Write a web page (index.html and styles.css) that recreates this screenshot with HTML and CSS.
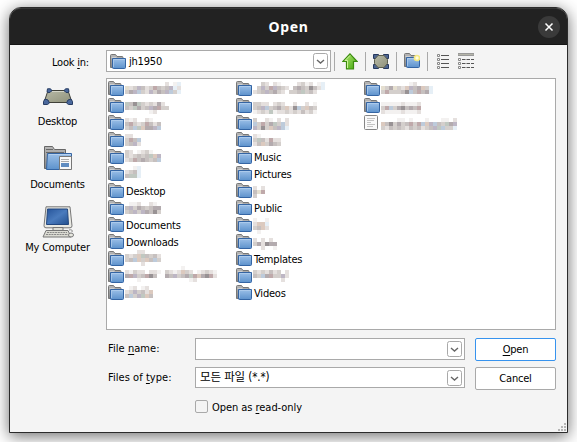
FILE: index.html
```html
<!DOCTYPE html>
<html lang="en">
<head>
<meta charset="utf-8">
<title>Open</title>
<link rel="stylesheet" href="styles.css">
</head>
<body>
<svg class="defs" width="0" height="0" aria-hidden="true">
  <defs>
    <linearGradient id="blue" x1="0" y1="0" x2="0" y2="1"><stop offset="0" stop-color="#9cc0e8"/><stop offset="1" stop-color="#5d92cc"/></linearGradient>
    <linearGradient id="grey" x1="0" y1="0" x2="0" y2="1"><stop offset="0" stop-color="#b8b8b8"/><stop offset="1" stop-color="#858585"/></linearGradient>
    <linearGradient id="olive" x1="0" y1="0" x2="1" y2="1"><stop offset="0" stop-color="#b9bba8"/><stop offset="1" stop-color="#8e9079"/></linearGradient>
    <linearGradient id="screen" x1="0" y1="0" x2="1" y2="1"><stop offset="0" stop-color="#26549a"/><stop offset=".5" stop-color="#4a7bbd"/><stop offset="1" stop-color="#23508f"/></linearGradient>
    <linearGradient id="green" x1="0" y1="0" x2="1" y2="1"><stop offset="0" stop-color="#b5e878"/><stop offset="1" stop-color="#43a80c"/></linearGradient>
    <symbol id="folder" viewBox="0 0 16 15">
      <path d="M.5 13.500V1.500q0-1 1-1h4l1.500 2h5q1 0 1 1v10z" fill="url(#grey)" stroke="#777"/>
      <path d="M1.500 3.500h5" stroke="#cfcfcf"/>
      <path d="M2.500 4.500h13v9q0 1-1 1h-11q-1 0-1-1z" fill="url(#blue)" stroke="#3465a4"/>
      <path d="M3.500 13V5.500h11" fill="none" stroke="#b5d0ee" stroke-opacity=".7"/>
    </symbol>
    <symbol id="file" viewBox="0 0 14 15">
      <rect x=".5" y=".5" width="13" height="14" rx="1" fill="#fafafa" stroke="#858585"/>
      <path d="M3 3.500h8M3 5.500h7M3 7.500h4M3 9.500h8M3 11.500h6" stroke="#c4c4c4"/>
    </symbol>
    <symbol id="chevron" viewBox="0 0 15 16">
      <rect x=".5" y=".5" width="14" height="15" rx="2" fill="#fff" stroke="#a9a9a9"/>
      <path d="M4 7 7.500 10 11 7" fill="none" stroke="#666" stroke-width="1.400"/>
    </symbol>
  </defs>
</svg>
<main class="window">
  <header class="titlebar">
    <h1>Open</h1>
    <button class="close" aria-label="Close"><svg width="22" height="22"><path d="M7.500 7.500l7 7m0-7l-7 7" stroke="#fff" stroke-width="1.500"/></svg></button>
  </header>
  <div class="content">
    <div class="toolbar">
      <span class="look">Look <u>i</u>n:</span>
      <div class="combo lookin"><svg width="16" height="15"><use href="#folder"/></svg><span>jh1950</span><svg class="arrow" width="15" height="16"><use href="#chevron"/></svg></div>
      <div class="tools">
        <i class="sep"></i>
        <svg class="tool" width="16" height="17"><path d="M8 .8 15.200 8.500H11.500v7.500h-7V8.500H.8z" fill="url(#green)" stroke="#3c8c10" stroke-width="1.200"/><path d="M8 2.500 3 7.500h2.500V15" fill="none" stroke="#cdf49b"/></svg>
        <i class="sep"></i>
        <svg class="tool" width="16" height="15"><path d="M.5.500h5v4h-5zM10.500.500h5v4h-5zM.5 10.500h5v4h-5zM10.500 10.500h5v4h-5z" fill="#4c6490" stroke="#26395e"/><path d="M5 1.500h6l3.500 4v4l-3.500 4H5L1.500 9.500v-4z" fill="url(#olive)" stroke="#5e604f"/></svg>
        <i class="sep"></i>
        <svg class="tool newdir" width="16" height="16"><use href="#folder" width="16" height="15"/><circle cx="13" cy="5" r="3.300" fill="#f5e982"/><circle cx="13" cy="5" r="1.700" fill="#fffce0"/></svg>
        <i class="sep"></i>
        <svg class="tool list-tool" width="12" height="15"><path d="M4 1.500h8M4 5.500h8M4 9.500h8M4 13.500h8" stroke="#555"/><path d="M.5.500h2v2h-2zM.5 4.500h2v2h-2zM.5 8.500h2v2h-2zM.5 12.500h2v2h-2z" fill="#fff" stroke="#888"/></svg>
        <svg class="tool" width="16" height="16"><path d="M0 .5h16v2H0z" fill="#b5b5a9" stroke="#999"/><path d="M4 6.500h12M4 10.500h12M4 14.500h12" stroke="#555" stroke-dasharray="3.500 1"/><path d="M.5 5.500h2v2h-2zM.5 9.500h2v2h-2zM.5 13.500h2v2h-2z" fill="#fff" stroke="#888"/></svg>
      </div>
    </div>
    <div class="middle">
      <nav class="places">
        <div class="place desk"><svg width="30" height="17"><path d="M5 2.500h20l4 12H1z" fill="url(#olive)" stroke="#3f4038"/><path d="M6 3.500h18" stroke="#d4d5c8"/><path d="M4.500.800h3l1.500 2-3 2-2-1zM25.500.800h-3l-1.500 2 3 2 2-1zM2 11l3 1 1.500 3-2 1.500H.5v-3zM28 11l-3 1-1.500 3 2 1.500h4v-3z" fill="#4a689c" stroke="#273c63"/></svg><span>Desktop</span></div>
        <div class="place docs"><svg width="30" height="26"><path d="M1.500 23.500V1.500h8l2 3h11v19z" fill="url(#grey)" stroke="#666"/><path d="M3 4.500h7M3 7.500h18" stroke="#686868"/><path d="M4.500 8.500h24v14q0 2-2 2h-23z" fill="url(#blue)" stroke="#3465a4"/><path d="M6 9.500h22" stroke="#b5d0ee"/><path d="M16.500 11.500h12v13h-12z" fill="#f8f8f8" stroke="#777"/><path d="M18 14.500h8M18 16.500h8" stroke="#aaa"/><path d="M18 18h8v4h-8z" fill="#608cc0"/></svg><span>Documents</span></div>
        <div class="place comp"><svg width="32" height="32"><path d="M4 .8h24l2 19q0 2-2 2H4q-2 0-2-2z" fill="#e9e9e3" stroke="#777"/><path d="M5.500 3h20l1 15.500h-22z" fill="url(#screen)" stroke="#23477e"/><path d="M11 21.500h10v3H11zM4 24.500h22l3 6.500H1z" fill="#dcdcd4" stroke="#777"/><path d="M5 26.500h20M4 28.500h22" stroke="#888" stroke-dasharray="2 .7"/><path d="M27 24q4-1 3 2" fill="none" stroke="#888"/><ellipse cx="29" cy="29" rx="2.500" ry="2" fill="#e8e8e0" stroke="#777"/></svg><span>My Computer</span></div>
      </nav>
      <div class="files" id="files"></div>
    </div>
    <div class="form">
      <label>File <u>n</u>ame:</label>
      <div class="combo"><span></span><svg class="arrow" width="15" height="16"><use href="#chevron"/></svg></div>
      <button class="btn primary"><span><u>O</u>pen</span></button>
      <label>Files of <u>t</u>ype:</label>
      <div class="combo second"><span>모든 파일 (*.*)</span><svg class="arrow" width="15" height="16"><use href="#chevron"/></svg></div>
      <button class="btn">Cancel</button>
    </div>
    <div class="readonly"><i class="box"></i><span>Open as <u>r</u>ead-only</span></div>
  </div>
  <svg class="grip" width="9" height="9"><path d="M6 0h2v2H6zM3 3h2v2H3zM6 3h2v2H6zM0 6h2v2H0zM3 6h2v2H3zM6 6h2v2H6z" fill="#b5b5b5"/></svg>
</main>
<script src="files.js"></script>
</body>
</html>
```
FILE: styles.css
```css
* { box-sizing: border-box; }
body {
  margin: 0;
  width: 577px;
  height: 442px;
  padding: 7px 9px 9px;
  overflow: hidden;
  background: #fff;
  font: 11px/15px "DejaVu Sans Condensed", "DejaVu Sans", "Noto Sans CJK KR", sans-serif;
  font-stretch: condensed;
  letter-spacing: -0.2px;
  color: #000;
}
.defs { position: absolute; }
svg { display: block; flex: none; }
u { text-underline-offset: 2px; text-decoration-thickness: 1px; text-decoration-skip-ink: none; }
button { font: inherit; letter-spacing: inherit; color: inherit; padding: 0; }
.window {
  position: relative;
  width: 559px;
  height: 426px;
  border: 1px solid #2b2b2b;
  border-radius: 12px 12px 0 0;
  background: #f4f4f4;
  box-shadow: 0 3px 16px rgba(0, 0, 0, .58);
}
.titlebar {
  display: grid;
  grid-template-columns: 1fr auto 1fr;
  align-items: center;
  height: 37px;
  background: #222;
  border-top: 1px solid #363636;
  border-bottom: 1px solid #151515;
  border-radius: 11px 11px 0 0;
}
h1 {
  grid-column: 2;
  margin: 0;
  font: bold 14px/20px "Noto Sans", "Open Sans", sans-serif;
  font-stretch: normal;
  letter-spacing: .6px;
  color: #fff;
}
.close {
  justify-self: end;
  margin-right: 7px;
  width: 22px;
  height: 22px;
  border: 0;
  border-radius: 50%;
  background: #3a3a3a;
}
.content { padding: 5px 11px 0 12px; }
.toolbar { display: flex; height: 22px; }
.look { width: 84px; padding: 5px 17px 0 0; text-align: right; white-space: nowrap; flex: none; }
.combo {
  display: flex;
  align-items: center;
  height: 22px;
  border: 1px solid #a9a9a9;
  background: #fff;
  padding: 0 2px 0 3px;
}
.combo .arrow { margin-left: auto; }
.lookin { width: 225px; gap: 3px; }
.tools { display: flex; align-items: center; margin-left: 3px; }
.sep { width: 1px; height: 19px; background: #a9a9a9; }
.tool { margin: 0 7px; }
.newdir { margin-right: 7px; }
.list-tool { margin-left: 9px; margin-right: 2px; }
.middle { display: flex; margin-top: 6px; }
.places { width: 84px; flex: none; padding-top: 10px; }
.place { display: flex; flex-direction: column; align-items: center; width: 72px; white-space: nowrap; }
.place span { margin-left: -1px; }
.place svg { margin-bottom: 9px; }
.docs svg { margin-bottom: 6px; }
.comp svg { margin-bottom: 2px; }
.docs { margin-top: 16px; }
.comp { margin-top: 14px; }
.files {
  display: grid;
  grid-template-rows: repeat(13, 17px);
  grid-auto-flow: column;
  grid-auto-columns: 128px;
  width: 450px;
  height: 252px;
  padding: 2px 1px;
  border: 1px solid #a9a9a9;
  background: #fff;
}
.item { position: relative; display: flex; gap: 2px; line-height: 18px; }
.item .mosaic { position: absolute; left: 17px; z-index: 1; }
.form {
  display: grid;
  grid-template-columns: 88px 270px 90px;
  grid-template-rows: 22px 22px;
  row-gap: 7px;
  margin: 8px 0 0 86px;
  align-items: start;
}
.form label { padding-top: 3px; letter-spacing: .05px; }
.form .combo { margin-left: -1px; width: 270px; padding-left: 4px; }
.form .second { height: 21px; }
.second span { font-size: 11.5px; letter-spacing: -.1px; }
.btn {
  justify-self: end;
  width: 81px;
  height: 23px;
  border: 1px solid #a9a9a9;
  border-radius: 2px;
  background: #fff;
}
.primary { border-color: #3793ee; }
.readonly { display: flex; gap: 4px; margin: 11px 0 0 173px; letter-spacing: -.05px; }
.box { width: 13px; height: 13px; border: 1px solid #a9a9a9; border-radius: 2px; }
.grip { position: absolute; right: 0; bottom: 0; }
```
FILE: files.js
```js
// Tones used by the censored names; "." leaves a cell empty.
const tones = {
  a: '#f3f1f0', b: '#e5e0de', c: '#d4cfcc', d: '#c6c0bf', e: '#b3abae', f: '#989294',
  w: '#dccabf', l: '#e6eff6', m: '#bdcbdb', p: '#bdb6c4', g: '#c0c8c1', y: '#e5dfd0', r: '#bfa9aa'
};
// Each entry is a name, or [first row y, cell rows] for a censored one.
const entries = [
  [82, ['..........b.al', 'ybcpdbcrdcdplb', 'cepmcbpcedpmcl']],
  [102, ['gdfgcbcbeb.', 'dcgecdpercc', '......ab...']],
  [118, ['bab..ba..', 'drcbcrdbd', 'cdmgweepm']],
  [134, ['bb..', 'crdm', 'cdpb']],
  [150, ['cb.abca..', 'cbcdcdgwp', 'bcrdedcdm']],
  [166, ['..al', 'bcdl', 'dggl']],
  'Desktop',
  [202, ['.aab..ba.', 'dpcedcdee', 'cdpcpedfc']],
  'Documents', 'Downloads',
  [250, ['...bb....', 'cbcwgdcdb', 'cdmwcwdmc', '....b....']],
  [266, ['..............a........', 'bacbb.bba.cbabwcb.abcba', 'erpcdrfd..edpcdegrwefrb', '...a............ab.....']],
  [286, ['.ab.ab.', 'bcpcdbw', 'dmcpgwd']],
  [82, ['..cb.ba....bcab.al', '.cpcrpdcb.dedcfdbl', 'bcdpdecb.ccdgcdb..']],
  [102, ['ccbb.bcb..b..b.a', 'cdpmcdecwbfmcwdc', 'abcbgabbcbcbdbca']],
  [118, ['c..ba.b.b', 'mcrcegcmb', 'pcfcwdpml']],
  [134, ['ba.....', 'cgdbrbb', 'bdwcedc']],
  'Music', 'Pictures',
  [186, ['b.b', 'dyr', 'c..']],
  'Public',
  [218, ['a..a', 'bwwl', 'cdwb', '.a..']],
  [238, ['b.b.b.', 'cebfee', '..b..a']],
  'Templates',
  [270, ['cbcbdbc.b', 'dcmerccpb', '.......b.']],
  'Videos',
  [82, ['.......ab....', 'yceycbwpdewcl', 'crcccdfmdrdel']],
  [102, ['aaaaabaaab', 'crmcefdedr', 'baaaabaaab']],
  [118, ['....aa.a...a...aa.b', 'wdfcecdrcrmwpmdcgep', 'cbdcdcbdcdbcdpgmccl']]
];
const svg = (w, h, body) => `<svg width="${w}" height="${h}">${body}</svg>`;
document.getElementById('files').innerHTML = entries.map((entry, i) => {
  const icon = i === 28 ? svg(14, 15, '<use href="#file"/>') : svg(16, 15, '<use href="#folder"/>');
  if (typeof entry === 'string') return `<div class="item">${icon}<span>${entry}</span></div>`;
  const [y, rows] = entry;
  const cells = rows.flatMap((row, r) => [...row].map((key, c) =>
    tones[key] ? `<rect x="${c * 4}" y="${r * 4}" width="4" height="4" fill="${tones[key]}"/>` : '')).join('');
  const top = y - 81 - (i % 13) * 17;
  return `<div class="item">${icon}<svg class="mosaic" style="top:${top}px" width="${rows[0].length * 4}" height="${rows.length * 4}" shape-rendering="crispEdges">${cells}</svg></div>`;
}).join('');
```
